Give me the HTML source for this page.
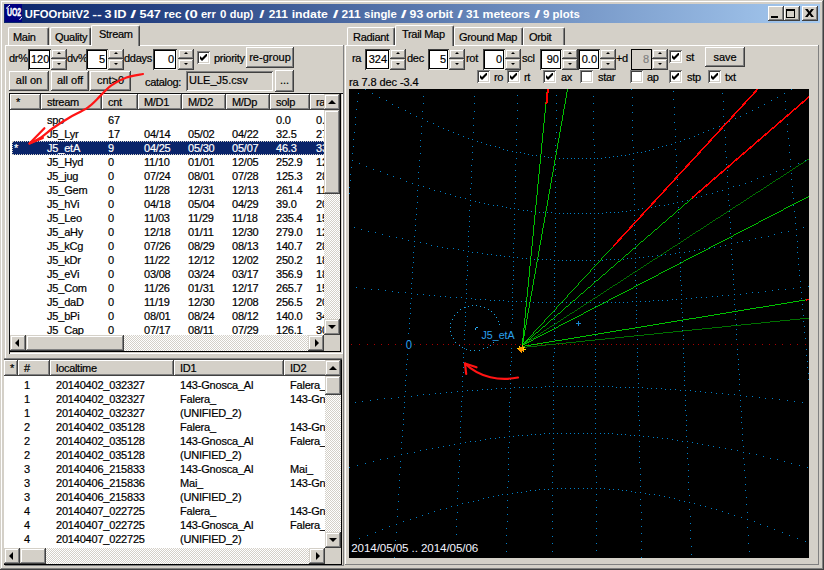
<!DOCTYPE html><html><head><meta charset="utf-8"><title>UFOOrbitV2</title><style>
html,body{margin:0;padding:0;}
body{width:824px;height:570px;overflow:hidden;background:#d4d0c8;position:relative;font-family:"Liberation Sans",sans-serif;font-size:11px;color:#000;-webkit-text-stroke:0.2px;}
.a{position:absolute;white-space:nowrap;}
.t{position:absolute;white-space:nowrap;line-height:13px;height:13px;letter-spacing:-0.3px;}
.btn{position:absolute;background:#d4d0c8;box-shadow:inset -1px -1px #404040,inset 1px 1px #fff,inset -2px -2px #808080,inset 2px 2px #d4d0c8;text-align:center;white-space:nowrap;}
.sb{position:absolute;background:#d4d0c8;box-shadow:inset -1px -1px #404040,inset 1px 1px #d4d0c8,inset -2px -2px #808080,inset 2px 2px #fff;}
.edit{position:absolute;background:#fff;box-shadow:inset 1px 1px #404040,inset -1px -1px #f4f4f0,inset 2px 2px #000,inset -2px -2px #000;text-align:right;white-space:nowrap;box-sizing:border-box;}
.cb{position:absolute;width:13px;height:13px;background:#fff;box-shadow:inset 1px 1px #808080,inset -1px -1px #fff,inset 2px 2px #404040,inset -2px -2px #d4d0c8;}
.hc{letter-spacing:-0.3px;position:absolute;background:#d4d0c8;box-shadow:inset -1px -1px #404040,inset 1px 1px #fff,inset -2px -2px #808080;box-sizing:border-box;white-space:nowrap;overflow:hidden;}
.trk{position:absolute;background-color:#fff;background-image:linear-gradient(45deg,#d4d0c8 25%,transparent 25%,transparent 75%,#d4d0c8 75%),linear-gradient(45deg,#d4d0c8 25%,transparent 25%,transparent 75%,#d4d0c8 75%);background-size:2px 2px;background-position:0 0,1px 1px;}
.row{position:absolute;left:0;height:14px;line-height:14px;white-space:nowrap;letter-spacing:-0.2px;}
.row span{position:absolute;top:0;}
</style></head><body>
<div class="a" id="title" style="left:4px;top:4px;width:816px;height:19px;background:linear-gradient(90deg,#0a246a 0%,#a6caf0 100%);"></div>
<svg class="a" style="left:5px;top:4px" width="17" height="18" viewBox="0 0 17 18"><rect width="17" height="18" fill="#000080"/><text x="2" y="12" font-family="Liberation Sans,sans-serif" font-size="10" font-weight="bold" fill="#fff" stroke="#fff" stroke-width="0.4" textLength="14.2" lengthAdjust="spacingAndGlyphs">UO2</text><path d="M1 4.5 L5 1 M14.5 16 L17 13" stroke="#fff" stroke-width="1"/></svg>
<svg class="a" id="ttxt" style="left:0;top:4px" width="600" height="18" viewBox="0 4 600 18"><g font-family="Liberation Sans,sans-serif" font-size="11.5" font-weight="bold" fill="#fff"><text x="24.8" y="17.7" textLength="64.4" lengthAdjust="spacingAndGlyphs">UFOOrbitV2</text><text x="92.3" y="17.7" textLength="9.5" lengthAdjust="spacingAndGlyphs">--</text><text x="104.5" y="17.7" textLength="7.0" lengthAdjust="spacingAndGlyphs">3</text><text x="113.7" y="17.7" textLength="12.8" lengthAdjust="spacingAndGlyphs">ID</text><text x="130.2" y="17.7" textLength="6.0" lengthAdjust="spacingAndGlyphs">/</text><text x="139.6" y="17.7" textLength="21.2" lengthAdjust="spacingAndGlyphs">547</text><text x="163.9" y="17.7" textLength="17.6" lengthAdjust="spacingAndGlyphs">rec</text><text x="184.5" y="17.7" textLength="13.2" lengthAdjust="spacingAndGlyphs">(0</text><text x="200.9" y="17.7" textLength="14.9" lengthAdjust="spacingAndGlyphs">err</text><text x="220.1" y="17.7" textLength="6.4" lengthAdjust="spacingAndGlyphs">0</text><text x="229.8" y="17.7" textLength="23.7" lengthAdjust="spacingAndGlyphs">dup)</text><text x="259.3" y="17.7" textLength="5.2" lengthAdjust="spacingAndGlyphs">/</text><text x="268.7" y="17.7" textLength="19.2" lengthAdjust="spacingAndGlyphs">211</text><text x="291.7" y="17.7" textLength="36.2" lengthAdjust="spacingAndGlyphs">indate</text><text x="332.8" y="17.7" textLength="5.7" lengthAdjust="spacingAndGlyphs">/</text><text x="341.5" y="17.7" textLength="19.2" lengthAdjust="spacingAndGlyphs">211</text><text x="364.1" y="17.7" textLength="32.7" lengthAdjust="spacingAndGlyphs">single</text><text x="400.8" y="17.7" textLength="5.9" lengthAdjust="spacingAndGlyphs">/</text><text x="409.6" y="17.7" textLength="13.7" lengthAdjust="spacingAndGlyphs">93</text><text x="425.9" y="17.7" textLength="27.2" lengthAdjust="spacingAndGlyphs">orbit</text><text x="457.3" y="17.7" textLength="5.7" lengthAdjust="spacingAndGlyphs">/</text><text x="466.0" y="17.7" textLength="13.1" lengthAdjust="spacingAndGlyphs">31</text><text x="482.5" y="17.7" textLength="47.6" lengthAdjust="spacingAndGlyphs">meteors</text><text x="534.2" y="17.7" textLength="6.0" lengthAdjust="spacingAndGlyphs">/</text><text x="543.1" y="17.7" textLength="6.4" lengthAdjust="spacingAndGlyphs">9</text><text x="552.6" y="17.7" textLength="27.2" lengthAdjust="spacingAndGlyphs">plots</text></g></svg>
<div class="btn" style="left:768px;top:6px;width:16px;height:15px;"></div>
<div class="a" style="left:771px;top:16px;width:7px;height:2px;background:#000"></div>
<div class="btn" style="left:784px;top:6px;width:16px;height:15px;"></div>
<div class="a" style="left:786px;top:9px;width:9px;height:9px;box-sizing:border-box;border:1px solid #000;border-top-width:2px"></div>
<div class="btn" style="left:802px;top:6px;width:16px;height:15px;"></div>
<svg class="a" style="left:805px;top:9px" width="9" height="8" viewBox="0 0 8 7" preserveAspectRatio="none"><path d="M0 0h2.4l1.6 2.1 1.6-2.1h2.4l-2.8 3.5 2.8 3.5h-2.4l-1.6-2.1-1.6 2.1h-2.4l2.8-3.5z" fill="#000"/></svg>
<div class="a" style="left:5px;top:45px;width:339px;height:521px;box-sizing:border-box;box-shadow:inset -1px -1px #808080,inset 1px 1px #fff;"></div>
<div class="a" style="left:8px;top:27px;width:41px;height:18px;box-sizing:border-box;border-top:1px solid #fff;border-left:1px solid #fff;border-right:1px solid #404040;border-radius:2px 2px 0 0;box-shadow:inset -1px 0 #808080;"></div>
<div class="t" style="left:13px;top:31px;">Main</div>
<div class="a" style="left:50px;top:27px;width:41px;height:18px;box-sizing:border-box;border-top:1px solid #fff;border-left:1px solid #fff;border-right:1px solid #404040;border-radius:2px 2px 0 0;box-shadow:inset -1px 0 #808080;"></div>
<div class="t" style="left:55px;top:31px;">Quality</div>
<div class="a" style="left:91px;top:25px;width:49px;height:21px;box-sizing:border-box;background:#d4d0c8;border-top:1px solid #fff;border-left:1px solid #fff;border-right:1px solid #404040;border-radius:2px 2px 0 0;box-shadow:inset -1px 0 #808080;"></div>
<div class="t" style="left:99px;top:28px;">Stream</div>
<div class="t" style="left:9px;top:52px;">dr%</div>
<div class="edit" style="left:28px;top:49px;width:23px;height:21px;line-height:20px;padding:0 3px 0 3px;"><span style="">120</span></div>
<div class="sb" style="left:51px;top:49px;width:16px;height:10px;"></div>
<div class="sb" style="left:51px;top:59px;width:16px;height:11px;"></div>
<svg class="a" style="left:57px;top:52px" width="4" height="2" viewBox="0 0 4 2"><polygon points="0,2 2,0 4,2" fill="#000"/></svg>
<svg class="a" style="left:57px;top:63px" width="4" height="2" viewBox="0 0 4 2"><polygon points="0,0 4,0 2,2" fill="#000"/></svg>
<div class="t" style="left:67px;top:52px;">dv%</div>
<div class="edit" style="left:86px;top:49px;width:22px;height:21px;line-height:20px;padding:0 3px 0 3px;"><span style="">5</span></div>
<div class="sb" style="left:108px;top:49px;width:16px;height:10px;"></div>
<div class="sb" style="left:108px;top:59px;width:16px;height:11px;"></div>
<svg class="a" style="left:114px;top:52px" width="4" height="2" viewBox="0 0 4 2"><polygon points="0,2 2,0 4,2" fill="#000"/></svg>
<svg class="a" style="left:114px;top:63px" width="4" height="2" viewBox="0 0 4 2"><polygon points="0,0 4,0 2,2" fill="#000"/></svg>
<div class="t" style="left:124px;top:52px;">ddays</div>
<div class="edit" style="left:153px;top:49px;width:24px;height:21px;line-height:20px;padding:0 3px 0 3px;"><span style="">0</span></div>
<div class="sb" style="left:178px;top:49px;width:16px;height:10px;"></div>
<div class="sb" style="left:178px;top:59px;width:16px;height:11px;"></div>
<svg class="a" style="left:184px;top:52px" width="4" height="2" viewBox="0 0 4 2"><polygon points="0,2 2,0 4,2" fill="#000"/></svg>
<svg class="a" style="left:184px;top:63px" width="4" height="2" viewBox="0 0 4 2"><polygon points="0,0 4,0 2,2" fill="#000"/></svg>
<div class="cb" style="left:197px;top:51px;"></div>
<svg class="a" style="left:200px;top:54px" width="7" height="7" viewBox="0 0 7 7"><path d="M0 2v3l2 2 5-5V-1L2 4z" fill="#000"/></svg>
<div class="t" style="left:214px;top:52px;">priority</div>
<div class="btn" style="left:246px;top:47px;width:48px;height:21px;line-height:20px;">re-group</div>
<div class="btn" style="left:9px;top:71px;width:40px;height:20px;line-height:19px;">all on</div>
<div class="btn" style="left:51px;top:71px;width:38px;height:20px;line-height:19px;">all off</div>
<div class="btn" style="left:90px;top:71px;width:41px;height:20px;line-height:19px;">cnt&gt;0</div>
<div class="t" style="left:145px;top:76px;">catalog:</div>
<div class="edit" style="left:186px;top:71px;width:87px;height:20px;line-height:19px;padding:0 3px 0 3px;background:#d4d0c8;text-align:left;box-shadow:inset 1px 1px #808080,inset -1px -1px #fff,inset 2px 2px #404040,inset -2px -2px #d4d0c8;"><span style="">ULE_J5.csv</span></div>
<div class="btn" style="left:275px;top:70px;width:19px;height:22px;line-height:21px;">...</div>
<div class="a" style="left:8px;top:92px;width:335px;height:262px;background:#fff;box-shadow:inset 1px 1px #e0ded8,inset 2px 2px #101010,inset -1px -1px #fff,inset -2px -2px #d4d0c8,inset -3px -3px #000;box-sizing:border-box;"></div>
<div class="a" style="left:10px;top:94px;width:330px;height:257px;background:#fff;"></div>
<div class="a" style="left:10px;top:94px;width:314px;height:241px;overflow:hidden;">
<div class="hc" style="left:0px;top:0;width:31px;height:16px;line-height:17px;padding-left:6px;">*</div>
<div class="hc" style="left:31px;top:0;width:61px;height:16px;line-height:17px;padding-left:6px;">stream</div>
<div class="hc" style="left:92px;top:0;width:36px;height:16px;line-height:17px;padding-left:6px;">cnt</div>
<div class="hc" style="left:128px;top:0;width:44px;height:16px;line-height:17px;padding-left:6px;">M/D1</div>
<div class="hc" style="left:172px;top:0;width:44px;height:16px;line-height:17px;padding-left:6px;">M/D2</div>
<div class="hc" style="left:216px;top:0;width:44px;height:16px;line-height:17px;padding-left:6px;">M/Dp</div>
<div class="hc" style="left:260px;top:0;width:40px;height:16px;line-height:17px;padding-left:6px;">solp</div>
<div class="hc" style="left:300px;top:0;width:40px;height:16px;line-height:17px;padding-left:6px;">ra</div>
<div class="row" style="top:19px;">
<span style="left:37px">spo</span>
<span style="left:98px">67</span>
<span style="left:266px">0.0</span>
<span style="left:306px">0.</span>
</div>
<div class="row" style="top:33px;">
<span style="left:37px">J5_Lyr</span>
<span style="left:98px">17</span>
<span style="left:134px">04/14</span>
<span style="left:178px">05/02</span>
<span style="left:222px">04/22</span>
<span style="left:266px">32.5</span>
<span style="left:306px">27</span>
</div>
<div class="a" style="left:2px;top:47px;width:314px;height:14px;background:#0a246a;box-sizing:border-box;border:1px dotted #d4d0c8;"></div>
<div class="row" style="top:47px;color:#fff;">
<span style="left:4px">*</span>
<span style="left:37px">J5_etA</span>
<span style="left:98px">9</span>
<span style="left:134px">04/25</span>
<span style="left:178px">05/30</span>
<span style="left:222px">05/07</span>
<span style="left:266px">46.3</span>
<span style="left:306px">33</span>
</div>
<div class="row" style="top:61px;">
<span style="left:37px">J5_Hyd</span>
<span style="left:98px">0</span>
<span style="left:134px">11/10</span>
<span style="left:178px">01/01</span>
<span style="left:222px">12/05</span>
<span style="left:266px">252.9</span>
<span style="left:306px">12</span>
</div>
<div class="row" style="top:75px;">
<span style="left:37px">J5_jug</span>
<span style="left:98px">0</span>
<span style="left:134px">07/24</span>
<span style="left:178px">08/01</span>
<span style="left:222px">07/28</span>
<span style="left:266px">125.3</span>
<span style="left:306px">28</span>
</div>
<div class="row" style="top:89px;">
<span style="left:37px">J5_Gem</span>
<span style="left:98px">0</span>
<span style="left:134px">11/28</span>
<span style="left:178px">12/31</span>
<span style="left:222px">12/13</span>
<span style="left:266px">261.4</span>
<span style="left:306px">11</span>
</div>
<div class="row" style="top:103px;">
<span style="left:37px">J5_hVi</span>
<span style="left:98px">0</span>
<span style="left:134px">04/18</span>
<span style="left:178px">05/04</span>
<span style="left:222px">04/29</span>
<span style="left:266px">39.0</span>
<span style="left:306px">20</span>
</div>
<div class="row" style="top:117px;">
<span style="left:37px">J5_Leo</span>
<span style="left:98px">0</span>
<span style="left:134px">11/03</span>
<span style="left:178px">11/29</span>
<span style="left:222px">11/18</span>
<span style="left:266px">235.4</span>
<span style="left:306px">15</span>
</div>
<div class="row" style="top:131px;">
<span style="left:37px">J5_aHy</span>
<span style="left:98px">0</span>
<span style="left:134px">12/18</span>
<span style="left:178px">01/11</span>
<span style="left:222px">12/30</span>
<span style="left:266px">279.0</span>
<span style="left:306px">12</span>
</div>
<div class="row" style="top:145px;">
<span style="left:37px">J5_kCg</span>
<span style="left:98px">0</span>
<span style="left:134px">07/26</span>
<span style="left:178px">08/29</span>
<span style="left:222px">08/13</span>
<span style="left:266px">140.7</span>
<span style="left:306px">28</span>
</div>
<div class="row" style="top:159px;">
<span style="left:37px">J5_kDr</span>
<span style="left:98px">0</span>
<span style="left:134px">11/22</span>
<span style="left:178px">12/12</span>
<span style="left:222px">12/02</span>
<span style="left:266px">250.2</span>
<span style="left:306px">18</span>
</div>
<div class="row" style="top:173px;">
<span style="left:37px">J5_eVi</span>
<span style="left:98px">0</span>
<span style="left:134px">03/08</span>
<span style="left:178px">03/24</span>
<span style="left:222px">03/17</span>
<span style="left:266px">356.9</span>
<span style="left:306px">18</span>
</div>
<div class="row" style="top:187px;">
<span style="left:37px">J5_Com</span>
<span style="left:98px">0</span>
<span style="left:134px">11/26</span>
<span style="left:178px">01/31</span>
<span style="left:222px">12/17</span>
<span style="left:266px">265.7</span>
<span style="left:306px">15</span>
</div>
<div class="row" style="top:201px;">
<span style="left:37px">J5_daD</span>
<span style="left:98px">0</span>
<span style="left:134px">11/19</span>
<span style="left:178px">12/30</span>
<span style="left:222px">12/08</span>
<span style="left:266px">256.5</span>
<span style="left:306px">20</span>
</div>
<div class="row" style="top:215px;">
<span style="left:37px">J5_bPi</span>
<span style="left:98px">0</span>
<span style="left:134px">08/01</span>
<span style="left:178px">08/24</span>
<span style="left:222px">08/12</span>
<span style="left:266px">140.0</span>
<span style="left:306px">34</span>
</div>
<div class="row" style="top:229px;">
<span style="left:37px">J5_Cap</span>
<span style="left:98px">0</span>
<span style="left:134px">07/17</span>
<span style="left:178px">08/11</span>
<span style="left:222px">07/29</span>
<span style="left:266px">126.1</span>
<span style="left:306px">30</span>
</div>
</div>
<div class="trk" style="left:324px;top:94px;width:16px;height:241px;"></div>
<div class="sb" style="left:324px;top:94px;width:16px;height:16px;"></div>
<svg class="a" style="left:328px;top:100px" width="8" height="4" viewBox="0 0 8 4"><polygon points="0,4 4,0 8,4" fill="#000"/></svg>
<div class="sb" style="left:324px;top:319px;width:16px;height:16px;"></div>
<svg class="a" style="left:328px;top:325px" width="8" height="4" viewBox="0 0 8 4"><polygon points="0,0 8,0 4,4" fill="#000"/></svg>
<div class="sb" style="left:324px;top:110px;width:16px;height:84px;"></div>
<div class="trk" style="left:10px;top:335px;width:314px;height:16px;"></div>
<div class="sb" style="left:10px;top:335px;width:16px;height:16px;"></div>
<svg class="a" style="left:15px;top:339px" width="4" height="8" viewBox="0 0 4 8"><polygon points="4,0 4,8 0,4" fill="#000"/></svg>
<div class="sb" style="left:308px;top:335px;width:16px;height:16px;"></div>
<svg class="a" style="left:315px;top:339px" width="4" height="8" viewBox="0 0 4 8"><polygon points="0,0 0,8 4,4" fill="#000"/></svg>
<div class="sb" style="left:26px;top:335px;width:98px;height:16px;"></div>
<div class="a" style="left:324px;top:335px;width:16px;height:16px;background:#d4d0c8;"></div>
<div class="a" style="left:2px;top:358px;width:340px;height:207px;background:#fff;box-shadow:inset 0 1px #808080,inset 0 2px #404040,inset -1px -1px #000;box-sizing:border-box;"></div>
<div class="a" style="left:4px;top:360px;width:337px;height:204px;background:#fff;"></div>
<div class="a" style="left:4px;top:360px;width:321px;height:188px;overflow:hidden;">
<div class="hc" style="left:0px;top:0;width:14px;height:16px;line-height:17px;padding-left:6px;">*</div>
<div class="hc" style="left:14px;top:0;width:32px;height:16px;line-height:17px;padding-left:6px;">#</div>
<div class="hc" style="left:46px;top:0;width:124px;height:16px;line-height:17px;padding-left:6px;">localtime</div>
<div class="hc" style="left:170px;top:0;width:110px;height:16px;line-height:17px;padding-left:6px;">ID1</div>
<div class="hc" style="left:280px;top:0;width:60px;height:16px;line-height:17px;padding-left:6px;">ID2</div>
<div class="row" style="top:18px;">
<span style="left:20px">1</span>
<span style="left:52px">20140402_032327</span>
<span style="left:176px">143-Gnosca_Al</span>
<span style="left:286px">Falera_</span>
</div>
<div class="row" style="top:32px;">
<span style="left:20px">1</span>
<span style="left:52px">20140402_032327</span>
<span style="left:176px">Falera_</span>
<span style="left:286px">143-Gnosca_Al</span>
</div>
<div class="row" style="top:46px;">
<span style="left:20px">1</span>
<span style="left:52px">20140402_032327</span>
<span style="left:176px">(UNIFIED_2)</span>
</div>
<div class="row" style="top:60px;">
<span style="left:20px">2</span>
<span style="left:52px">20140402_035128</span>
<span style="left:176px">Falera_</span>
<span style="left:286px">143-Gnosca_Al</span>
</div>
<div class="row" style="top:74px;">
<span style="left:20px">2</span>
<span style="left:52px">20140402_035128</span>
<span style="left:176px">143-Gnosca_Al</span>
<span style="left:286px">Falera_</span>
</div>
<div class="row" style="top:88px;">
<span style="left:20px">2</span>
<span style="left:52px">20140402_035128</span>
<span style="left:176px">(UNIFIED_2)</span>
</div>
<div class="row" style="top:102px;">
<span style="left:20px">3</span>
<span style="left:52px">20140406_215833</span>
<span style="left:176px">143-Gnosca_Al</span>
<span style="left:286px">Mai_</span>
</div>
<div class="row" style="top:116px;">
<span style="left:20px">3</span>
<span style="left:52px">20140406_215836</span>
<span style="left:176px">Mai_</span>
<span style="left:286px">143-Gnosca_Al</span>
</div>
<div class="row" style="top:130px;">
<span style="left:20px">3</span>
<span style="left:52px">20140406_215833</span>
<span style="left:176px">(UNIFIED_2)</span>
</div>
<div class="row" style="top:144px;">
<span style="left:20px">4</span>
<span style="left:52px">20140407_022725</span>
<span style="left:176px">Falera_</span>
<span style="left:286px">143-Gnosca_Al</span>
</div>
<div class="row" style="top:158px;">
<span style="left:20px">4</span>
<span style="left:52px">20140407_022725</span>
<span style="left:176px">143-Gnosca_Al</span>
<span style="left:286px">Falera_</span>
</div>
<div class="row" style="top:172px;">
<span style="left:20px">4</span>
<span style="left:52px">20140407_022725</span>
<span style="left:176px">(UNIFIED_2)</span>
</div>
</div>
<div class="trk" style="left:325px;top:360px;width:16px;height:188px;"></div>
<div class="sb" style="left:325px;top:360px;width:16px;height:16px;"></div>
<svg class="a" style="left:329px;top:366px" width="8" height="4" viewBox="0 0 8 4"><polygon points="0,4 4,0 8,4" fill="#000"/></svg>
<div class="sb" style="left:325px;top:532px;width:16px;height:16px;"></div>
<svg class="a" style="left:329px;top:538px" width="8" height="4" viewBox="0 0 8 4"><polygon points="0,0 8,0 4,4" fill="#000"/></svg>
<div class="sb" style="left:325px;top:376px;width:16px;height:19px;"></div>
<div class="trk" style="left:4px;top:548px;width:321px;height:16px;"></div>
<div class="sb" style="left:4px;top:548px;width:16px;height:16px;"></div>
<svg class="a" style="left:9px;top:552px" width="4" height="8" viewBox="0 0 4 8"><polygon points="4,0 4,8 0,4" fill="#000"/></svg>
<div class="sb" style="left:309px;top:548px;width:16px;height:16px;"></div>
<svg class="a" style="left:316px;top:552px" width="4" height="8" viewBox="0 0 4 8"><polygon points="0,0 0,8 4,4" fill="#000"/></svg>
<div class="sb" style="left:20px;top:548px;width:26px;height:16px;"></div>
<div class="a" style="left:325px;top:548px;width:16px;height:16px;background:#d4d0c8;"></div>
<div class="a" style="left:345px;top:45px;width:474px;height:520px;box-sizing:border-box;box-shadow:inset -1px -1px #808080,inset 1px 1px #fff;"></div>
<div class="a" style="left:347px;top:27px;width:48px;height:18px;box-sizing:border-box;border-top:1px solid #fff;border-left:1px solid #fff;border-right:1px solid #404040;border-radius:2px 2px 0 0;box-shadow:inset -1px 0 #808080;"></div>
<div class="t" style="left:353px;top:31px;">Radiant</div>
<div class="a" style="left:454px;top:27px;width:69px;height:18px;box-sizing:border-box;border-top:1px solid #fff;border-left:1px solid #fff;border-right:1px solid #404040;border-radius:2px 2px 0 0;box-shadow:inset -1px 0 #808080;"></div>
<div class="t" style="left:459px;top:31px;">Ground Map</div>
<div class="a" style="left:523px;top:27px;width:42px;height:18px;box-sizing:border-box;border-top:1px solid #fff;border-left:1px solid #fff;border-right:1px solid #404040;border-radius:2px 2px 0 0;box-shadow:inset -1px 0 #808080;"></div>
<div class="t" style="left:529px;top:31px;">Orbit</div>
<div class="a" style="left:395px;top:25px;width:59px;height:21px;box-sizing:border-box;background:#d4d0c8;border-top:1px solid #fff;border-left:1px solid #fff;border-right:1px solid #404040;border-radius:2px 2px 0 0;box-shadow:inset -1px 0 #808080;"></div>
<div class="t" style="left:402px;top:28px;">Trail Map</div>
<div class="t" style="left:352px;top:52px;">ra</div>
<div class="edit" style="left:365px;top:49px;width:25px;height:21px;line-height:20px;padding:0 3px 0 3px;"><span style="">324</span></div>
<div class="sb" style="left:390px;top:49px;width:16px;height:10px;"></div>
<div class="sb" style="left:390px;top:59px;width:16px;height:11px;"></div>
<svg class="a" style="left:396px;top:52px" width="4" height="2" viewBox="0 0 4 2"><polygon points="0,2 2,0 4,2" fill="#000"/></svg>
<svg class="a" style="left:396px;top:63px" width="4" height="2" viewBox="0 0 4 2"><polygon points="0,0 4,0 2,2" fill="#000"/></svg>
<div class="t" style="left:407px;top:52px;">dec</div>
<div class="edit" style="left:428px;top:49px;width:21px;height:21px;line-height:20px;padding:0 3px 0 3px;"><span style="">5</span></div>
<div class="sb" style="left:449px;top:49px;width:16px;height:10px;"></div>
<div class="sb" style="left:449px;top:59px;width:16px;height:11px;"></div>
<svg class="a" style="left:455px;top:52px" width="4" height="2" viewBox="0 0 4 2"><polygon points="0,2 2,0 4,2" fill="#000"/></svg>
<svg class="a" style="left:455px;top:63px" width="4" height="2" viewBox="0 0 4 2"><polygon points="0,0 4,0 2,2" fill="#000"/></svg>
<div class="t" style="left:466px;top:52px;">rot</div>
<div class="edit" style="left:483px;top:49px;width:22px;height:21px;line-height:20px;padding:0 3px 0 3px;"><span style="">0</span></div>
<div class="sb" style="left:505px;top:49px;width:16px;height:10px;"></div>
<div class="sb" style="left:505px;top:59px;width:16px;height:11px;"></div>
<svg class="a" style="left:511px;top:52px" width="4" height="2" viewBox="0 0 4 2"><polygon points="0,2 2,0 4,2" fill="#000"/></svg>
<svg class="a" style="left:511px;top:63px" width="4" height="2" viewBox="0 0 4 2"><polygon points="0,0 4,0 2,2" fill="#000"/></svg>
<div class="t" style="left:522px;top:52px;">scl</div>
<div class="edit" style="left:540px;top:49px;width:22px;height:21px;line-height:20px;padding:0 3px 0 3px;"><span style="">90</span></div>
<div class="sb" style="left:562px;top:49px;width:16px;height:10px;"></div>
<div class="sb" style="left:562px;top:59px;width:16px;height:11px;"></div>
<svg class="a" style="left:568px;top:52px" width="4" height="2" viewBox="0 0 4 2"><polygon points="0,2 2,0 4,2" fill="#000"/></svg>
<svg class="a" style="left:568px;top:63px" width="4" height="2" viewBox="0 0 4 2"><polygon points="0,0 4,0 2,2" fill="#000"/></svg>
<div class="edit" style="left:578px;top:49px;width:22px;height:21px;line-height:20px;padding:0 3px 0 3px;"><span style="">0.0</span></div>
<div class="sb" style="left:600px;top:49px;width:16px;height:10px;"></div>
<div class="sb" style="left:600px;top:59px;width:16px;height:11px;"></div>
<svg class="a" style="left:606px;top:52px" width="4" height="2" viewBox="0 0 4 2"><polygon points="0,2 2,0 4,2" fill="#000"/></svg>
<svg class="a" style="left:606px;top:63px" width="4" height="2" viewBox="0 0 4 2"><polygon points="0,0 4,0 2,2" fill="#000"/></svg>
<div class="t" style="left:616px;top:52px;">+d</div>
<div class="edit" style="left:631px;top:49px;width:21px;height:21px;line-height:20px;padding:0 3px 0 3px;background:#d4d0c8;color:#808080;box-shadow:inset 0 0 0 1px #000;"><span style="">8</span></div>
<div class="sb" style="left:652px;top:49px;width:16px;height:10px;"></div>
<div class="sb" style="left:652px;top:59px;width:16px;height:11px;"></div>
<svg class="a" style="left:658px;top:52px" width="4" height="2" viewBox="0 0 4 2"><polygon points="0,2 2,0 4,2" fill="#000"/></svg>
<svg class="a" style="left:658px;top:63px" width="4" height="2" viewBox="0 0 4 2"><polygon points="0,0 4,0 2,2" fill="#000"/></svg>
<div class="cb" style="left:669px;top:50px;"></div>
<svg class="a" style="left:672px;top:53px" width="7" height="7" viewBox="0 0 7 7"><path d="M0 2v3l2 2 5-5V-1L2 4z" fill="#000"/></svg>
<div class="t" style="left:686px;top:51px;">st</div>
<div class="btn" style="left:705px;top:47px;width:40px;height:20px;line-height:19px;line-height:20px;">save</div>
<div class="cb" style="left:477px;top:70px;"></div>
<svg class="a" style="left:480px;top:73px" width="7" height="7" viewBox="0 0 7 7"><path d="M0 2v3l2 2 5-5V-1L2 4z" fill="#000"/></svg>
<div class="t" style="left:494px;top:71px;">ro</div>
<div class="cb" style="left:507px;top:70px;"></div>
<svg class="a" style="left:510px;top:73px" width="7" height="7" viewBox="0 0 7 7"><path d="M0 2v3l2 2 5-5V-1L2 4z" fill="#000"/></svg>
<div class="t" style="left:524px;top:71px;">rt</div>
<div class="cb" style="left:543px;top:70px;"></div>
<svg class="a" style="left:546px;top:73px" width="7" height="7" viewBox="0 0 7 7"><path d="M0 2v3l2 2 5-5V-1L2 4z" fill="#000"/></svg>
<div class="t" style="left:561px;top:71px;">ax</div>
<div class="cb" style="left:580px;top:70px;"></div>
<div class="t" style="left:598px;top:71px;">star</div>
<div class="cb" style="left:630px;top:70px;"></div>
<div class="t" style="left:647px;top:71px;">ap</div>
<div class="cb" style="left:669px;top:70px;"></div>
<svg class="a" style="left:672px;top:73px" width="7" height="7" viewBox="0 0 7 7"><path d="M0 2v3l2 2 5-5V-1L2 4z" fill="#000"/></svg>
<div class="t" style="left:687px;top:71px;">stp</div>
<div class="cb" style="left:708px;top:70px;"></div>
<svg class="a" style="left:711px;top:73px" width="7" height="7" viewBox="0 0 7 7"><path d="M0 2v3l2 2 5-5V-1L2 4z" fill="#000"/></svg>
<div class="t" style="left:725px;top:71px;">txt</div>
<div class="t" style="left:349px;top:76px;letter-spacing:-0.1px;">ra 7.8 dec -3.4</div>
<svg class="a" style="left:349px;top:89px" width="460" height="469" viewBox="349 89 460 469" shape-rendering="crispEdges"><rect x="349" y="89" width="460" height="469" fill="#000"/><path d="M394 557h1v1h-1zM395 548h1v1h-1zM395 540h1v1h-1zM396 532h1v1h-1zM396 524h1v1h-1zM397 516h1v1h-1zM397 509h1v1h-1zM398 501h1v1h-1zM398 494h1v1h-1zM399 487h1v1h-1zM399 480h1v1h-1zM399 474h1v1h-1zM400 467h1v1h-1zM400 461h1v1h-1zM401 454h1v1h-1zM401 448h1v1h-1zM401 442h1v1h-1zM402 436h1v1h-1zM402 430h1v1h-1zM403 424h1v1h-1zM403 419h1v1h-1zM403 413h1v1h-1zM404 407h1v1h-1zM404 402h1v1h-1zM404 396h1v1h-1zM405 391h1v1h-1zM405 385h1v1h-1zM405 380h1v1h-1zM406 375h1v1h-1zM406 369h1v1h-1zM406 364h1v1h-1zM407 359h1v1h-1zM407 354h1v1h-1zM407 349h1v1h-1zM408 344h1v1h-1zM408 338h1v1h-1zM408 333h1v1h-1zM409 328h1v1h-1zM409 323h1v1h-1zM409 318h1v1h-1zM410 313h1v1h-1zM410 308h1v1h-1zM410 303h1v1h-1zM411 298h1v1h-1zM411 293h1v1h-1zM411 288h1v1h-1zM411 283h1v1h-1zM412 278h1v1h-1zM412 272h1v1h-1zM412 267h1v1h-1zM413 262h1v1h-1zM413 257h1v1h-1zM413 252h1v1h-1zM414 246h1v1h-1zM414 241h1v1h-1zM414 236h1v1h-1zM415 230h1v1h-1zM415 225h1v1h-1zM415 219h1v1h-1zM416 214h1v1h-1zM416 208h1v1h-1zM417 202h1v1h-1zM417 196h1v1h-1zM417 190h1v1h-1zM418 185h1v1h-1zM418 178h1v1h-1zM418 172h1v1h-1zM419 166h1v1h-1zM419 160h1v1h-1zM420 153h1v1h-1zM420 146h1v1h-1zM420 140h1v1h-1zM421 133h1v1h-1zM421 126h1v1h-1zM422 118h1v1h-1zM422 111h1v1h-1zM423 103h1v1h-1zM423 96h1v1h-1zM349 193h1v1h-1zM349 187h1v1h-1zM350 180h1v1h-1zM350 174h1v1h-1zM351 167h1v1h-1zM352 160h1v1h-1zM352 153h1v1h-1zM353 146h1v1h-1zM353 139h1v1h-1zM354 132h1v1h-1zM355 124h1v1h-1zM355 117h1v1h-1zM356 109h1v1h-1zM357 101h1v1h-1zM358 93h1v1h-1zM808 379h1v1h-1zM808 373h1v1h-1zM807 367h1v1h-1zM807 361h1v1h-1zM806 355h1v1h-1zM806 349h1v1h-1zM805 344h1v1h-1zM805 338h1v1h-1zM804 332h1v1h-1zM804 326h1v1h-1zM803 321h1v1h-1zM803 315h1v1h-1zM802 309h1v1h-1zM802 304h1v1h-1zM801 298h1v1h-1zM801 292h1v1h-1zM800 287h1v1h-1zM800 281h1v1h-1zM799 275h1v1h-1zM799 270h1v1h-1zM798 264h1v1h-1zM798 258h1v1h-1zM797 252h1v1h-1zM797 247h1v1h-1zM797 241h1v1h-1zM796 235h1v1h-1zM796 229h1v1h-1zM795 223h1v1h-1zM795 217h1v1h-1zM794 211h1v1h-1zM793 205h1v1h-1zM793 198h1v1h-1zM792 192h1v1h-1zM792 186h1v1h-1zM791 179h1v1h-1zM791 173h1v1h-1zM790 166h1v1h-1zM790 159h1v1h-1zM789 152h1v1h-1zM789 145h1v1h-1zM788 138h1v1h-1zM787 131h1v1h-1zM787 124h1v1h-1zM786 116h1v1h-1zM785 109h1v1h-1zM785 101h1v1h-1zM784 93h1v1h-1zM749 551h1v1h-1zM748 543h1v1h-1zM748 535h1v1h-1zM747 527h1v1h-1zM747 519h1v1h-1zM747 512h1v1h-1zM746 504h1v1h-1zM746 497h1v1h-1zM745 490h1v1h-1zM745 484h1v1h-1zM745 477h1v1h-1zM744 470h1v1h-1zM744 464h1v1h-1zM743 458h1v1h-1zM743 452h1v1h-1zM743 446h1v1h-1zM742 440h1v1h-1zM742 434h1v1h-1zM742 428h1v1h-1zM741 422h1v1h-1zM741 417h1v1h-1zM741 411h1v1h-1zM740 406h1v1h-1zM740 400h1v1h-1zM740 395h1v1h-1zM739 390h1v1h-1zM739 384h1v1h-1zM739 379h1v1h-1zM739 374h1v1h-1zM738 369h1v1h-1zM738 364h1v1h-1zM738 359h1v1h-1zM737 354h1v1h-1zM737 349h1v1h-1zM737 344h1v1h-1zM736 339h1v1h-1zM736 334h1v1h-1zM736 329h1v1h-1zM736 324h1v1h-1zM735 319h1v1h-1zM735 314h1v1h-1zM735 309h1v1h-1zM734 304h1v1h-1zM734 299h1v1h-1zM734 294h1v1h-1zM734 289h1v1h-1zM733 284h1v1h-1zM733 279h1v1h-1zM733 274h1v1h-1zM732 269h1v1h-1zM732 264h1v1h-1zM732 259h1v1h-1zM731 254h1v1h-1zM731 249h1v1h-1zM731 243h1v1h-1zM731 238h1v1h-1zM730 233h1v1h-1zM730 228h1v1h-1zM730 222h1v1h-1zM729 217h1v1h-1zM729 211h1v1h-1zM729 205h1v1h-1zM728 200h1v1h-1zM728 194h1v1h-1zM728 188h1v1h-1zM727 182h1v1h-1zM727 176h1v1h-1zM727 170h1v1h-1zM726 164h1v1h-1zM726 157h1v1h-1zM725 151h1v1h-1zM725 144h1v1h-1zM725 137h1v1h-1zM724 130h1v1h-1zM724 123h1v1h-1zM723 116h1v1h-1zM723 109h1v1h-1zM723 101h1v1h-1zM722 93h1v1h-1zM691 554h1v1h-1zM691 546h1v1h-1zM690 538h1v1h-1zM690 530h1v1h-1zM690 523h1v1h-1zM690 516h1v1h-1zM689 509h1v1h-1zM689 502h1v1h-1zM689 495h1v1h-1zM688 489h1v1h-1zM688 482h1v1h-1zM688 476h1v1h-1zM688 470h1v1h-1zM688 464h1v1h-1zM687 458h1v1h-1zM687 453h1v1h-1zM687 447h1v1h-1zM687 441h1v1h-1zM686 436h1v1h-1zM686 430h1v1h-1zM686 425h1v1h-1zM686 420h1v1h-1zM686 415h1v1h-1zM685 410h1v1h-1zM685 405h1v1h-1zM685 400h1v1h-1zM685 395h1v1h-1zM685 390h1v1h-1zM684 385h1v1h-1zM684 380h1v1h-1zM684 376h1v1h-1zM684 371h1v1h-1zM684 366h1v1h-1zM684 362h1v1h-1zM683 357h1v1h-1zM683 353h1v1h-1zM683 348h1v1h-1zM683 344h1v1h-1zM683 339h1v1h-1zM683 335h1v1h-1zM682 330h1v1h-1zM682 326h1v1h-1zM682 321h1v1h-1zM682 317h1v1h-1zM682 312h1v1h-1zM681 308h1v1h-1zM681 303h1v1h-1zM681 299h1v1h-1zM681 294h1v1h-1zM681 290h1v1h-1zM681 285h1v1h-1zM680 280h1v1h-1zM680 276h1v1h-1zM680 271h1v1h-1zM680 267h1v1h-1zM680 262h1v1h-1zM680 257h1v1h-1zM679 252h1v1h-1zM679 248h1v1h-1zM679 243h1v1h-1zM679 238h1v1h-1zM679 233h1v1h-1zM678 228h1v1h-1zM678 223h1v1h-1zM678 218h1v1h-1zM678 212h1v1h-1zM678 207h1v1h-1zM677 202h1v1h-1zM677 196h1v1h-1zM677 191h1v1h-1zM677 185h1v1h-1zM677 179h1v1h-1zM676 173h1v1h-1zM676 167h1v1h-1zM676 161h1v1h-1zM676 155h1v1h-1zM675 149h1v1h-1zM675 142h1v1h-1zM675 136h1v1h-1zM675 129h1v1h-1zM674 122h1v1h-1zM674 114h1v1h-1zM674 107h1v1h-1zM673 99h1v1h-1zM673 91h1v1h-1zM641 557h1v1h-1zM641 549h1v1h-1zM641 541h1v1h-1zM641 533h1v1h-1zM641 526h1v1h-1zM641 519h1v1h-1zM641 512h1v1h-1zM640 505h1v1h-1zM640 499h1v1h-1zM640 492h1v1h-1zM640 486h1v1h-1zM640 480h1v1h-1zM640 474h1v1h-1zM640 468h1v1h-1zM639 462h1v1h-1zM639 457h1v1h-1zM639 451h1v1h-1zM639 446h1v1h-1zM639 441h1v1h-1zM639 435h1v1h-1zM639 430h1v1h-1zM639 425h1v1h-1zM639 420h1v1h-1zM638 415h1v1h-1zM638 411h1v1h-1zM638 406h1v1h-1zM638 401h1v1h-1zM638 396h1v1h-1zM638 392h1v1h-1zM638 387h1v1h-1zM638 383h1v1h-1zM638 378h1v1h-1zM638 374h1v1h-1zM637 369h1v1h-1zM637 365h1v1h-1zM637 361h1v1h-1zM637 356h1v1h-1zM637 352h1v1h-1zM637 348h1v1h-1zM637 344h1v1h-1zM637 339h1v1h-1zM637 335h1v1h-1zM637 331h1v1h-1zM636 327h1v1h-1zM636 322h1v1h-1zM636 318h1v1h-1zM636 314h1v1h-1zM636 310h1v1h-1zM636 305h1v1h-1zM636 301h1v1h-1zM636 297h1v1h-1zM636 293h1v1h-1zM636 288h1v1h-1zM636 284h1v1h-1zM635 280h1v1h-1zM635 275h1v1h-1zM635 271h1v1h-1zM635 267h1v1h-1zM635 262h1v1h-1zM635 258h1v1h-1zM635 253h1v1h-1zM635 248h1v1h-1zM635 244h1v1h-1zM635 239h1v1h-1zM635 234h1v1h-1zM634 230h1v1h-1zM634 225h1v1h-1zM634 220h1v1h-1zM634 215h1v1h-1zM634 210h1v1h-1zM634 204h1v1h-1zM634 199h1v1h-1zM634 194h1v1h-1zM634 188h1v1h-1zM633 183h1v1h-1zM633 177h1v1h-1zM633 171h1v1h-1zM633 165h1v1h-1zM633 159h1v1h-1zM633 153h1v1h-1zM633 147h1v1h-1zM632 140h1v1h-1zM632 134h1v1h-1zM632 127h1v1h-1zM632 120h1v1h-1zM632 112h1v1h-1zM632 105h1v1h-1zM632 97h1v1h-1zM631 89h1v1h-1zM596 550h1v1h-1zM596 543h1v1h-1zM596 535h1v1h-1zM596 528h1v1h-1zM596 521h1v1h-1zM596 514h1v1h-1zM596 507h1v1h-1zM596 500h1v1h-1zM596 494h1v1h-1zM596 488h1v1h-1zM596 482h1v1h-1zM596 476h1v1h-1zM595 470h1v1h-1zM595 465h1v1h-1zM595 459h1v1h-1zM595 454h1v1h-1zM595 448h1v1h-1zM595 443h1v1h-1zM595 438h1v1h-1zM595 433h1v1h-1zM595 428h1v1h-1zM595 423h1v1h-1zM595 418h1v1h-1zM595 413h1v1h-1zM595 409h1v1h-1zM595 404h1v1h-1zM595 399h1v1h-1zM595 395h1v1h-1zM595 391h1v1h-1zM595 386h1v1h-1zM595 382h1v1h-1zM595 377h1v1h-1zM595 373h1v1h-1zM595 369h1v1h-1zM595 364h1v1h-1zM595 360h1v1h-1zM595 356h1v1h-1zM595 352h1v1h-1zM595 348h1v1h-1zM595 344h1v1h-1zM595 339h1v1h-1zM595 335h1v1h-1zM595 331h1v1h-1zM595 327h1v1h-1zM595 323h1v1h-1zM595 319h1v1h-1zM595 315h1v1h-1zM595 311h1v1h-1zM595 306h1v1h-1zM594 302h1v1h-1zM594 298h1v1h-1zM594 294h1v1h-1zM594 290h1v1h-1zM594 286h1v1h-1zM594 281h1v1h-1zM594 277h1v1h-1zM594 273h1v1h-1zM594 269h1v1h-1zM594 264h1v1h-1zM594 260h1v1h-1zM594 255h1v1h-1zM594 251h1v1h-1zM594 246h1v1h-1zM594 242h1v1h-1zM594 237h1v1h-1zM594 233h1v1h-1zM594 228h1v1h-1zM594 223h1v1h-1zM594 218h1v1h-1zM594 213h1v1h-1zM594 208h1v1h-1zM594 203h1v1h-1zM594 198h1v1h-1zM594 192h1v1h-1zM594 187h1v1h-1zM594 181h1v1h-1zM594 176h1v1h-1zM594 170h1v1h-1zM594 164h1v1h-1zM594 158h1v1h-1zM594 152h1v1h-1zM594 145h1v1h-1zM593 139h1v1h-1zM593 132h1v1h-1zM593 125h1v1h-1zM593 118h1v1h-1zM593 111h1v1h-1zM593 103h1v1h-1zM593 96h1v1h-1zM552 551h1v1h-1zM552 543h1v1h-1zM552 536h1v1h-1zM552 528h1v1h-1zM552 521h1v1h-1zM552 514h1v1h-1zM552 508h1v1h-1zM552 501h1v1h-1zM552 495h1v1h-1zM552 488h1v1h-1zM552 482h1v1h-1zM552 476h1v1h-1zM552 471h1v1h-1zM553 465h1v1h-1zM553 459h1v1h-1zM553 454h1v1h-1zM553 449h1v1h-1zM553 443h1v1h-1zM553 438h1v1h-1zM553 433h1v1h-1zM553 428h1v1h-1zM553 423h1v1h-1zM553 418h1v1h-1zM553 414h1v1h-1zM553 409h1v1h-1zM553 404h1v1h-1zM553 400h1v1h-1zM553 395h1v1h-1zM553 391h1v1h-1zM553 386h1v1h-1zM553 382h1v1h-1zM553 377h1v1h-1zM553 373h1v1h-1zM553 369h1v1h-1zM553 365h1v1h-1zM553 360h1v1h-1zM553 356h1v1h-1zM554 352h1v1h-1zM554 348h1v1h-1zM554 344h1v1h-1zM554 339h1v1h-1zM554 335h1v1h-1zM554 331h1v1h-1zM554 327h1v1h-1zM554 323h1v1h-1zM554 319h1v1h-1zM554 315h1v1h-1zM554 311h1v1h-1zM554 306h1v1h-1zM554 302h1v1h-1zM554 298h1v1h-1zM554 294h1v1h-1zM554 290h1v1h-1zM554 285h1v1h-1zM554 281h1v1h-1zM554 277h1v1h-1zM554 273h1v1h-1zM554 268h1v1h-1zM554 264h1v1h-1zM554 260h1v1h-1zM554 255h1v1h-1zM554 251h1v1h-1zM555 246h1v1h-1zM555 242h1v1h-1zM555 237h1v1h-1zM555 232h1v1h-1zM555 227h1v1h-1zM555 223h1v1h-1zM555 218h1v1h-1zM555 213h1v1h-1zM555 208h1v1h-1zM555 203h1v1h-1zM555 197h1v1h-1zM555 192h1v1h-1zM555 187h1v1h-1zM555 181h1v1h-1zM555 175h1v1h-1zM555 169h1v1h-1zM555 164h1v1h-1zM555 158h1v1h-1zM555 151h1v1h-1zM555 145h1v1h-1zM555 138h1v1h-1zM556 132h1v1h-1zM556 125h1v1h-1zM556 118h1v1h-1zM556 110h1v1h-1zM556 103h1v1h-1zM556 95h1v1h-1zM506 551h1v1h-1zM506 543h1v1h-1zM506 535h1v1h-1zM506 528h1v1h-1zM507 521h1v1h-1zM507 514h1v1h-1zM507 507h1v1h-1zM507 500h1v1h-1zM507 494h1v1h-1zM507 487h1v1h-1zM508 481h1v1h-1zM508 475h1v1h-1zM508 469h1v1h-1zM508 464h1v1h-1zM508 458h1v1h-1zM508 452h1v1h-1zM508 447h1v1h-1zM509 442h1v1h-1zM509 436h1v1h-1zM509 431h1v1h-1zM509 426h1v1h-1zM509 421h1v1h-1zM509 416h1v1h-1zM509 411h1v1h-1zM509 406h1v1h-1zM509 402h1v1h-1zM510 397h1v1h-1zM510 392h1v1h-1zM510 388h1v1h-1zM510 383h1v1h-1zM510 379h1v1h-1zM510 374h1v1h-1zM510 370h1v1h-1zM510 365h1v1h-1zM511 361h1v1h-1zM511 357h1v1h-1zM511 352h1v1h-1zM511 348h1v1h-1zM511 344h1v1h-1zM511 339h1v1h-1zM511 335h1v1h-1zM511 331h1v1h-1zM511 326h1v1h-1zM511 322h1v1h-1zM512 318h1v1h-1zM512 314h1v1h-1zM512 309h1v1h-1zM512 305h1v1h-1zM512 301h1v1h-1zM512 297h1v1h-1zM512 292h1v1h-1zM512 288h1v1h-1zM512 284h1v1h-1zM513 279h1v1h-1zM513 275h1v1h-1zM513 270h1v1h-1zM513 266h1v1h-1zM513 261h1v1h-1zM513 257h1v1h-1zM513 252h1v1h-1zM513 248h1v1h-1zM513 243h1v1h-1zM514 238h1v1h-1zM514 233h1v1h-1zM514 229h1v1h-1zM514 224h1v1h-1zM514 219h1v1h-1zM514 214h1v1h-1zM514 208h1v1h-1zM514 203h1v1h-1zM515 198h1v1h-1zM515 193h1v1h-1zM515 187h1v1h-1zM515 181h1v1h-1zM515 176h1v1h-1zM515 170h1v1h-1zM515 164h1v1h-1zM516 158h1v1h-1zM516 152h1v1h-1zM516 145h1v1h-1zM516 139h1v1h-1zM516 132h1v1h-1zM516 125h1v1h-1zM517 118h1v1h-1zM517 110h1v1h-1zM517 103h1v1h-1zM517 95h1v1h-1zM455 550h1v1h-1zM455 542h1v1h-1zM456 534h1v1h-1zM456 526h1v1h-1zM456 519h1v1h-1zM457 512h1v1h-1zM457 505h1v1h-1zM457 498h1v1h-1zM457 491h1v1h-1zM458 485h1v1h-1zM458 478h1v1h-1zM458 472h1v1h-1zM459 466h1v1h-1zM459 460h1v1h-1zM459 454h1v1h-1zM459 449h1v1h-1zM460 443h1v1h-1zM460 437h1v1h-1zM460 432h1v1h-1zM460 427h1v1h-1zM460 421h1v1h-1zM461 416h1v1h-1zM461 411h1v1h-1zM461 406h1v1h-1zM461 401h1v1h-1zM462 396h1v1h-1zM462 391h1v1h-1zM462 386h1v1h-1zM462 381h1v1h-1zM462 376h1v1h-1zM463 372h1v1h-1zM463 367h1v1h-1zM463 362h1v1h-1zM463 357h1v1h-1zM463 353h1v1h-1zM464 348h1v1h-1zM464 344h1v1h-1zM464 339h1v1h-1zM464 334h1v1h-1zM464 330h1v1h-1zM465 325h1v1h-1zM465 321h1v1h-1zM465 316h1v1h-1zM465 312h1v1h-1zM465 307h1v1h-1zM465 302h1v1h-1zM466 298h1v1h-1zM466 293h1v1h-1zM466 289h1v1h-1zM466 284h1v1h-1zM466 279h1v1h-1zM467 275h1v1h-1zM467 270h1v1h-1zM467 265h1v1h-1zM467 261h1v1h-1zM467 256h1v1h-1zM468 251h1v1h-1zM468 246h1v1h-1zM468 241h1v1h-1zM468 236h1v1h-1zM468 231h1v1h-1zM469 226h1v1h-1zM469 221h1v1h-1zM469 216h1v1h-1zM469 210h1v1h-1zM470 205h1v1h-1zM470 200h1v1h-1zM470 194h1v1h-1zM470 188h1v1h-1zM471 183h1v1h-1zM471 177h1v1h-1zM471 171h1v1h-1zM471 165h1v1h-1zM472 159h1v1h-1zM472 152h1v1h-1zM472 146h1v1h-1zM472 139h1v1h-1zM473 132h1v1h-1zM473 125h1v1h-1zM473 118h1v1h-1zM474 111h1v1h-1zM474 103h1v1h-1zM474 96h1v1h-1zM396 524h1v1h-1zM389 526h1v1h-1zM382 529h1v1h-1zM375 532h1v1h-1zM367 535h1v1h-1zM359 538h1v1h-1zM351 541h1v1h-1zM805 541h1v1h-1zM797 538h1v1h-1zM789 535h1v1h-1zM782 532h1v1h-1zM774 529h1v1h-1zM767 526h1v1h-1zM760 524h1v1h-1zM754 521h1v1h-1zM747 519h1v1h-1zM741 517h1v1h-1zM734 515h1v1h-1zM728 513h1v1h-1zM722 511h1v1h-1zM716 509h1v1h-1zM711 508h1v1h-1zM705 506h1v1h-1zM700 505h1v1h-1zM694 503h1v1h-1zM689 502h1v1h-1zM684 501h1v1h-1zM679 500h1v1h-1zM674 498h1v1h-1zM669 497h1v1h-1zM664 496h1v1h-1zM659 495h1v1h-1zM654 494h1v1h-1zM649 494h1v1h-1zM645 493h1v1h-1zM640 492h1v1h-1zM635 492h1v1h-1zM631 491h1v1h-1zM626 490h1v1h-1zM622 490h1v1h-1zM618 489h1v1h-1zM613 489h1v1h-1zM609 489h1v1h-1zM604 488h1v1h-1zM600 488h1v1h-1zM596 488h1v1h-1zM591 488h1v1h-1zM587 488h1v1h-1zM583 488h1v1h-1zM578 488h1v1h-1zM574 488h1v1h-1zM570 488h1v1h-1zM565 488h1v1h-1zM561 488h1v1h-1zM557 488h1v1h-1zM552 488h1v1h-1zM548 489h1v1h-1zM544 489h1v1h-1zM539 489h1v1h-1zM535 490h1v1h-1zM530 490h1v1h-1zM526 491h1v1h-1zM521 492h1v1h-1zM517 492h1v1h-1zM512 493h1v1h-1zM507 494h1v1h-1zM502 494h1v1h-1zM498 495h1v1h-1zM493 496h1v1h-1zM488 497h1v1h-1zM483 498h1v1h-1zM478 500h1v1h-1zM473 501h1v1h-1zM468 502h1v1h-1zM462 503h1v1h-1zM457 505h1v1h-1zM451 506h1v1h-1zM446 508h1v1h-1zM440 509h1v1h-1zM434 511h1v1h-1zM428 513h1v1h-1zM422 515h1v1h-1zM416 517h1v1h-1zM410 519h1v1h-1zM403 521h1v1h-1zM401 454h1v1h-1zM394 456h1v1h-1zM387 458h1v1h-1zM380 459h1v1h-1zM373 461h1v1h-1zM365 463h1v1h-1zM357 465h1v1h-1zM349 467h1v1h-1zM807 467h1v1h-1zM799 465h1v1h-1zM791 463h1v1h-1zM784 461h1v1h-1zM777 459h1v1h-1zM770 458h1v1h-1zM763 456h1v1h-1zM756 454h1v1h-1zM749 453h1v1h-1zM743 452h1v1h-1zM737 450h1v1h-1zM731 449h1v1h-1zM725 448h1v1h-1zM719 447h1v1h-1zM713 446h1v1h-1zM708 445h1v1h-1zM702 444h1v1h-1zM697 443h1v1h-1zM692 442h1v1h-1zM687 441h1v1h-1zM682 441h1v1h-1zM677 440h1v1h-1zM672 439h1v1h-1zM667 438h1v1h-1zM662 438h1v1h-1zM657 437h1v1h-1zM653 437h1v1h-1zM648 436h1v1h-1zM643 436h1v1h-1zM639 435h1v1h-1zM634 435h1v1h-1zM630 435h1v1h-1zM625 434h1v1h-1zM621 434h1v1h-1zM617 434h1v1h-1zM612 433h1v1h-1zM608 433h1v1h-1zM604 433h1v1h-1zM600 433h1v1h-1zM595 433h1v1h-1zM591 433h1v1h-1zM587 433h1v1h-1zM583 433h1v1h-1zM578 433h1v1h-1zM574 433h1v1h-1zM570 433h1v1h-1zM566 433h1v1h-1zM561 433h1v1h-1zM557 433h1v1h-1zM553 433h1v1h-1zM549 433h1v1h-1zM544 433h1v1h-1zM540 434h1v1h-1zM535 434h1v1h-1zM531 434h1v1h-1zM527 435h1v1h-1zM522 435h1v1h-1zM518 435h1v1h-1zM513 436h1v1h-1zM509 436h1v1h-1zM504 437h1v1h-1zM499 437h1v1h-1zM495 438h1v1h-1zM490 438h1v1h-1zM485 439h1v1h-1zM480 440h1v1h-1zM475 441h1v1h-1zM470 441h1v1h-1zM465 442h1v1h-1zM460 443h1v1h-1zM454 444h1v1h-1zM449 445h1v1h-1zM443 446h1v1h-1zM438 447h1v1h-1zM432 448h1v1h-1zM426 449h1v1h-1zM420 450h1v1h-1zM414 452h1v1h-1zM407 453h1v1h-1zM404 396h1v1h-1zM398 397h1v1h-1zM391 398h1v1h-1zM384 398h1v1h-1zM377 399h1v1h-1zM370 400h1v1h-1zM362 401h1v1h-1zM355 402h1v1h-1zM802 402h1v1h-1zM794 401h1v1h-1zM787 400h1v1h-1zM779 399h1v1h-1zM772 398h1v1h-1zM765 398h1v1h-1zM759 397h1v1h-1zM752 396h1v1h-1zM746 396h1v1h-1zM740 395h1v1h-1zM734 394h1v1h-1zM728 394h1v1h-1zM722 393h1v1h-1zM716 393h1v1h-1zM711 392h1v1h-1zM705 392h1v1h-1zM700 391h1v1h-1zM695 391h1v1h-1zM690 390h1v1h-1zM685 390h1v1h-1zM680 390h1v1h-1zM675 389h1v1h-1zM670 389h1v1h-1zM665 389h1v1h-1zM661 388h1v1h-1zM656 388h1v1h-1zM651 388h1v1h-1zM647 388h1v1h-1zM642 387h1v1h-1zM638 387h1v1h-1zM633 387h1v1h-1zM629 387h1v1h-1zM625 387h1v1h-1zM620 387h1v1h-1zM616 387h1v1h-1zM612 386h1v1h-1zM608 386h1v1h-1zM603 386h1v1h-1zM599 386h1v1h-1zM595 386h1v1h-1zM591 386h1v1h-1zM587 386h1v1h-1zM582 386h1v1h-1zM578 386h1v1h-1zM574 386h1v1h-1zM570 386h1v1h-1zM566 386h1v1h-1zM562 386h1v1h-1zM557 386h1v1h-1zM553 386h1v1h-1zM549 386h1v1h-1zM545 386h1v1h-1zM541 387h1v1h-1zM536 387h1v1h-1zM532 387h1v1h-1zM528 387h1v1h-1zM523 387h1v1h-1zM519 387h1v1h-1zM514 387h1v1h-1zM510 388h1v1h-1zM505 388h1v1h-1zM501 388h1v1h-1zM496 388h1v1h-1zM491 389h1v1h-1zM487 389h1v1h-1zM482 389h1v1h-1zM477 390h1v1h-1zM472 390h1v1h-1zM467 390h1v1h-1zM462 391h1v1h-1zM457 391h1v1h-1zM451 392h1v1h-1zM446 392h1v1h-1zM440 393h1v1h-1zM435 393h1v1h-1zM429 394h1v1h-1zM423 394h1v1h-1zM417 395h1v1h-1zM411 396h1v1h-1zM411 293h1v1h-1zM405 292h1v1h-1zM398 292h1v1h-1zM392 291h1v1h-1zM385 290h1v1h-1zM378 289h1v1h-1zM371 289h1v1h-1zM364 288h1v1h-1zM356 287h1v1h-1zM808 286h1v1h-1zM800 287h1v1h-1zM793 288h1v1h-1zM785 289h1v1h-1zM778 289h1v1h-1zM772 290h1v1h-1zM765 291h1v1h-1zM758 292h1v1h-1zM752 292h1v1h-1zM746 293h1v1h-1zM740 294h1v1h-1zM734 294h1v1h-1zM728 295h1v1h-1zM722 295h1v1h-1zM717 296h1v1h-1zM712 296h1v1h-1zM706 297h1v1h-1zM701 297h1v1h-1zM696 297h1v1h-1zM691 298h1v1h-1zM686 298h1v1h-1zM681 299h1v1h-1zM676 299h1v1h-1zM672 299h1v1h-1zM667 300h1v1h-1zM662 300h1v1h-1zM658 300h1v1h-1zM653 300h1v1h-1zM649 301h1v1h-1zM645 301h1v1h-1zM640 301h1v1h-1zM636 301h1v1h-1zM632 301h1v1h-1zM627 302h1v1h-1zM623 302h1v1h-1zM619 302h1v1h-1zM615 302h1v1h-1zM611 302h1v1h-1zM607 302h1v1h-1zM603 302h1v1h-1zM599 302h1v1h-1zM594 302h1v1h-1zM590 302h1v1h-1zM586 302h1v1h-1zM582 302h1v1h-1zM578 302h1v1h-1zM574 302h1v1h-1zM570 302h1v1h-1zM566 302h1v1h-1zM562 302h1v1h-1zM558 302h1v1h-1zM554 302h1v1h-1zM550 302h1v1h-1zM546 302h1v1h-1zM542 302h1v1h-1zM538 302h1v1h-1zM533 302h1v1h-1zM529 302h1v1h-1zM525 301h1v1h-1zM521 301h1v1h-1zM516 301h1v1h-1zM512 301h1v1h-1zM508 301h1v1h-1zM503 300h1v1h-1zM499 300h1v1h-1zM494 300h1v1h-1zM490 300h1v1h-1zM485 299h1v1h-1zM480 299h1v1h-1zM475 299h1v1h-1zM471 298h1v1h-1zM466 298h1v1h-1zM461 297h1v1h-1zM456 297h1v1h-1zM450 297h1v1h-1zM445 296h1v1h-1zM440 296h1v1h-1zM434 295h1v1h-1zM429 295h1v1h-1zM423 294h1v1h-1zM417 294h1v1h-1zM414 241h1v1h-1zM408 240h1v1h-1zM402 238h1v1h-1zM396 237h1v1h-1zM389 236h1v1h-1zM382 234h1v1h-1zM375 232h1v1h-1zM368 231h1v1h-1zM361 229h1v1h-1zM354 227h1v1h-1zM803 227h1v1h-1zM796 229h1v1h-1zM788 231h1v1h-1zM781 232h1v1h-1zM774 234h1v1h-1zM768 236h1v1h-1zM761 237h1v1h-1zM755 238h1v1h-1zM749 240h1v1h-1zM742 241h1v1h-1zM737 242h1v1h-1zM731 243h1v1h-1zM725 245h1v1h-1zM720 246h1v1h-1zM714 247h1v1h-1zM709 248h1v1h-1zM704 248h1v1h-1zM699 249h1v1h-1zM694 250h1v1h-1zM689 251h1v1h-1zM684 252h1v1h-1zM679 252h1v1h-1zM675 253h1v1h-1zM670 254h1v1h-1zM665 254h1v1h-1zM661 255h1v1h-1zM657 255h1v1h-1zM652 256h1v1h-1zM648 256h1v1h-1zM643 257h1v1h-1zM639 257h1v1h-1zM635 258h1v1h-1zM631 258h1v1h-1zM627 258h1v1h-1zM623 259h1v1h-1zM618 259h1v1h-1zM614 259h1v1h-1zM610 259h1v1h-1zM606 259h1v1h-1zM602 260h1v1h-1zM598 260h1v1h-1zM594 260h1v1h-1zM590 260h1v1h-1zM586 260h1v1h-1zM582 260h1v1h-1zM578 260h1v1h-1zM574 260h1v1h-1zM570 260h1v1h-1zM566 260h1v1h-1zM562 260h1v1h-1zM558 260h1v1h-1zM554 260h1v1h-1zM550 259h1v1h-1zM546 259h1v1h-1zM542 259h1v1h-1zM538 259h1v1h-1zM534 259h1v1h-1zM530 258h1v1h-1zM526 258h1v1h-1zM522 258h1v1h-1zM517 257h1v1h-1zM513 257h1v1h-1zM509 256h1v1h-1zM504 256h1v1h-1zM500 255h1v1h-1zM496 255h1v1h-1zM491 254h1v1h-1zM487 254h1v1h-1zM482 253h1v1h-1zM477 252h1v1h-1zM472 252h1v1h-1zM468 251h1v1h-1zM463 250h1v1h-1zM458 249h1v1h-1zM453 248h1v1h-1zM447 248h1v1h-1zM442 247h1v1h-1zM437 246h1v1h-1zM431 245h1v1h-1zM426 243h1v1h-1zM420 242h1v1h-1zM418 185h1v1h-1zM412 183h1v1h-1zM406 181h1v1h-1zM400 178h1v1h-1zM393 176h1v1h-1zM387 174h1v1h-1zM380 171h1v1h-1zM373 169h1v1h-1zM366 166h1v1h-1zM359 163h1v1h-1zM352 160h1v1h-1zM805 160h1v1h-1zM798 163h1v1h-1zM790 166h1v1h-1zM783 169h1v1h-1zM776 171h1v1h-1zM770 174h1v1h-1zM763 176h1v1h-1zM757 178h1v1h-1zM751 181h1v1h-1zM745 183h1v1h-1zM739 185h1v1h-1zM733 186h1v1h-1zM728 188h1v1h-1zM722 190h1v1h-1zM717 191h1v1h-1zM712 193h1v1h-1zM706 194h1v1h-1zM701 196h1v1h-1zM696 197h1v1h-1zM692 198h1v1h-1zM687 200h1v1h-1zM682 201h1v1h-1zM677 202h1v1h-1zM673 203h1v1h-1zM668 204h1v1h-1zM664 205h1v1h-1zM659 205h1v1h-1zM655 206h1v1h-1zM651 207h1v1h-1zM647 208h1v1h-1zM642 208h1v1h-1zM638 209h1v1h-1zM634 210h1v1h-1zM630 210h1v1h-1zM626 211h1v1h-1zM622 211h1v1h-1zM618 212h1v1h-1zM614 212h1v1h-1zM610 212h1v1h-1zM606 212h1v1h-1zM602 213h1v1h-1zM598 213h1v1h-1zM594 213h1v1h-1zM590 213h1v1h-1zM586 213h1v1h-1zM582 213h1v1h-1zM578 213h1v1h-1zM574 213h1v1h-1zM570 213h1v1h-1zM567 213h1v1h-1zM563 213h1v1h-1zM559 213h1v1h-1zM555 213h1v1h-1zM551 212h1v1h-1zM547 212h1v1h-1zM543 212h1v1h-1zM539 212h1v1h-1zM535 211h1v1h-1zM531 211h1v1h-1zM527 210h1v1h-1zM523 210h1v1h-1zM518 209h1v1h-1zM514 208h1v1h-1zM510 208h1v1h-1zM506 207h1v1h-1zM502 206h1v1h-1zM497 205h1v1h-1zM493 205h1v1h-1zM488 204h1v1h-1zM484 203h1v1h-1zM479 202h1v1h-1zM475 201h1v1h-1zM470 200h1v1h-1zM465 198h1v1h-1zM460 197h1v1h-1zM455 196h1v1h-1zM450 194h1v1h-1zM445 193h1v1h-1zM440 191h1v1h-1zM434 190h1v1h-1zM429 188h1v1h-1zM423 186h1v1h-1zM422 118h1v1h-1zM416 116h1v1h-1zM410 113h1v1h-1zM405 110h1v1h-1zM398 107h1v1h-1zM392 104h1v1h-1zM386 100h1v1h-1zM379 97h1v1h-1zM372 93h1v1h-1zM365 89h1v1h-1zM791 89h1v1h-1zM784 93h1v1h-1zM777 97h1v1h-1zM771 100h1v1h-1zM764 104h1v1h-1zM758 107h1v1h-1zM752 110h1v1h-1zM746 113h1v1h-1zM740 116h1v1h-1zM735 118h1v1h-1zM729 121h1v1h-1zM724 123h1v1h-1zM719 126h1v1h-1zM713 128h1v1h-1zM708 130h1v1h-1zM703 132h1v1h-1zM698 134h1v1h-1zM694 136h1v1h-1zM689 138h1v1h-1zM684 139h1v1h-1zM680 141h1v1h-1zM675 142h1v1h-1zM671 144h1v1h-1zM666 145h1v1h-1zM662 146h1v1h-1zM658 147h1v1h-1zM653 149h1v1h-1zM649 150h1v1h-1zM645 151h1v1h-1zM641 152h1v1h-1zM637 152h1v1h-1zM633 153h1v1h-1zM629 154h1v1h-1zM625 155h1v1h-1zM621 155h1v1h-1zM617 156h1v1h-1zM613 156h1v1h-1zM609 157h1v1h-1zM605 157h1v1h-1zM601 158h1v1h-1zM597 158h1v1h-1zM594 158h1v1h-1zM590 158h1v1h-1zM586 158h1v1h-1zM582 158h1v1h-1zM578 158h1v1h-1zM574 158h1v1h-1zM571 158h1v1h-1zM567 158h1v1h-1zM563 158h1v1h-1zM559 158h1v1h-1zM555 158h1v1h-1zM551 157h1v1h-1zM548 157h1v1h-1zM544 156h1v1h-1zM540 156h1v1h-1zM536 155h1v1h-1zM532 155h1v1h-1zM528 154h1v1h-1zM524 153h1v1h-1zM520 152h1v1h-1zM516 152h1v1h-1zM512 151h1v1h-1zM507 150h1v1h-1zM503 149h1v1h-1zM499 147h1v1h-1zM495 146h1v1h-1zM490 145h1v1h-1zM486 144h1v1h-1zM481 142h1v1h-1zM477 141h1v1h-1zM472 139h1v1h-1zM468 138h1v1h-1zM463 136h1v1h-1zM458 134h1v1h-1zM453 132h1v1h-1zM448 130h1v1h-1zM443 128h1v1h-1zM438 126h1v1h-1zM433 123h1v1h-1zM427 121h1v1h-1z" fill="#0080c8"/><path d="M408 344h1v1h-1zM401 344h1v1h-1zM395 344h1v1h-1zM388 344h1v1h-1zM381 344h1v1h-1zM374 344h1v1h-1zM367 344h1v1h-1zM359 344h1v1h-1zM351 344h1v1h-1zM805 344h1v1h-1zM797 344h1v1h-1zM790 344h1v1h-1zM782 344h1v1h-1zM775 344h1v1h-1zM769 344h1v1h-1zM762 344h1v1h-1zM755 344h1v1h-1zM749 344h1v1h-1zM743 344h1v1h-1zM737 344h1v1h-1zM731 344h1v1h-1zM725 344h1v1h-1zM719 344h1v1h-1zM714 344h1v1h-1zM709 344h1v1h-1zM703 344h1v1h-1zM698 344h1v1h-1zM693 344h1v1h-1zM688 344h1v1h-1zM683 344h1v1h-1zM678 344h1v1h-1zM673 344h1v1h-1zM668 344h1v1h-1zM664 344h1v1h-1zM659 344h1v1h-1zM655 344h1v1h-1zM650 344h1v1h-1zM646 344h1v1h-1zM641 344h1v1h-1zM637 344h1v1h-1zM633 344h1v1h-1zM628 344h1v1h-1zM624 344h1v1h-1zM620 344h1v1h-1zM616 344h1v1h-1zM611 344h1v1h-1zM607 344h1v1h-1zM603 344h1v1h-1zM599 344h1v1h-1zM595 344h1v1h-1zM591 344h1v1h-1zM587 344h1v1h-1zM582 344h1v1h-1zM578 344h1v1h-1zM574 344h1v1h-1zM570 344h1v1h-1zM566 344h1v1h-1zM562 344h1v1h-1zM558 344h1v1h-1zM554 344h1v1h-1zM549 344h1v1h-1zM545 344h1v1h-1zM541 344h1v1h-1zM537 344h1v1h-1zM533 344h1v1h-1zM528 344h1v1h-1zM524 344h1v1h-1zM520 344h1v1h-1zM515 344h1v1h-1zM511 344h1v1h-1zM506 344h1v1h-1zM502 344h1v1h-1zM497 344h1v1h-1zM493 344h1v1h-1zM488 344h1v1h-1zM483 344h1v1h-1zM479 344h1v1h-1zM474 344h1v1h-1zM469 344h1v1h-1zM464 344h1v1h-1zM459 344h1v1h-1zM453 344h1v1h-1zM448 344h1v1h-1zM443 344h1v1h-1zM437 344h1v1h-1zM432 344h1v1h-1zM426 344h1v1h-1zM420 344h1v1h-1zM414 344h1v1h-1z" fill="#a80000"/><path d="M576 323.5h5M578.5 321v5" stroke="#1888d0" stroke-width="1" fill="none"/><path d="M476 305h1v1h-1zM472 305h1v1h-1zM468 306h1v1h-1zM464 307h1v1h-1zM460 309h1v1h-1zM457 312h1v1h-1zM454 315h1v1h-1zM452 319h1v1h-1zM450 323h1v1h-1zM450 327h1v1h-1zM450 331h1v1h-1zM451 335h1v1h-1zM453 338h1v1h-1zM455 342h1v1h-1zM459 345h1v1h-1zM462 347h1v1h-1zM466 349h1v1h-1zM470 350h1v1h-1zM474 350h1v1h-1zM479 350h1v1h-1zM483 348h1v1h-1zM487 347h1v1h-1zM490 345h1v1h-1zM493 342h1v1h-1zM495 339h1v1h-1zM497 335h1v1h-1zM498 332h1v1h-1zM499 328h1v1h-1zM499 324h1v1h-1zM498 321h1v1h-1zM496 317h1v1h-1zM494 314h1v1h-1zM491 311h1v1h-1zM488 309h1v1h-1zM484 307h1v1h-1zM480 306h1v1h-1z" fill="#18a0e0"/><path d="M475 330v-2h1v-1h2v1h-2v2z" fill="#28a8f0"/><line x1="522.3" y1="345.5" x2="547.3" y2="89.0" stroke="#00f000" stroke-width="0.8"/><line x1="546.4" y1="104.0" x2="547.9" y2="89.0" stroke="#ff0000" stroke-width="2"/><line x1="522.3" y1="345.5" x2="567.6" y2="89.0" stroke="#00f000" stroke-width="0.8"/><line x1="522.0" y1="345.5" x2="757.8" y2="89.0" stroke="#00f000" stroke-width="0.8"/><line x1="613.0" y1="246.6" x2="757.8" y2="89.0" stroke="#ff0000" stroke-width="1.6"/><line x1="522.0" y1="345.5" x2="809.5" y2="96.5" stroke="#00f000" stroke-width="0.8"/><line x1="692.0" y1="198.0" x2="809.5" y2="96.5" stroke="#ff0000" stroke-width="1.6"/><line x1="522.0" y1="345.5" x2="809.5" y2="158.5" stroke="#008c00" stroke-width="0.8"/><line x1="522.0" y1="345.5" x2="809.5" y2="196.0" stroke="#00f000" stroke-width="0.8"/><line x1="522.0" y1="346.5" x2="809.5" y2="299.3" stroke="#00f000" stroke-width="0.8"/><line x1="806.0" y1="299.9" x2="809.5" y2="299.3" stroke="#ff0000" stroke-width="1.6"/><line x1="522.0" y1="347.5" x2="809.5" y2="318.0" stroke="#008c00" stroke-width="0.8"/><path d="M517.5 349.5h5M520.5 346.5v5" stroke="#ff9000" stroke-width="1" fill="none"/><path d="M519.5 347.5h5M522.5 344.5v5" stroke="#ff9000" stroke-width="1" fill="none"/><path d="M520.5 349.5h5M523.5 346.5v5" stroke="#ffd800" stroke-width="1" fill="none"/><path d="M516.5 348.5h5M519.5 345.5v5" stroke="#ffd800" stroke-width="1" fill="none"/><path d="M518.5 350.5h5M521.5 347.5v5" stroke="#ff9000" stroke-width="1" fill="none"/><rect x="519" y="347" width="4" height="4" fill="#ff9800"/><rect x="481" y="326" width="35" height="15" fill="#000"/><text x="481.5" y="338.6" font-family="Liberation Sans,sans-serif" font-size="11.5" fill="#2aa0ee" textLength="33.2" lengthAdjust="spacingAndGlyphs" style="shape-rendering:auto">J5_etA</text><rect x="405" y="338" width="8" height="13" fill="#000"/><text x="405.8" y="348.8" font-family="Liberation Sans,sans-serif" font-size="12.4" fill="#2aa0ee" textLength="6.3" lengthAdjust="spacingAndGlyphs">0</text><rect x="350" y="541" width="130" height="14" fill="#000"/><text x="351.2" y="552" font-family="Liberation Sans,sans-serif" font-size="11.6" fill="#f4f4ff" textLength="127" lengthAdjust="spacing">2014/05/05 .. 2014/05/06</text><g style="shape-rendering:auto" fill="none" stroke="#ff1414" stroke-width="2.2" stroke-linecap="round" stroke-linejoin="round"><path d="M518 377.5 C500 381,480 378,465 363.5"/><path d="M466.2 374 L465 363.5 L476.5 367.3"/></g></svg>
<svg class="a" style="left:0;top:0;pointer-events:none" width="345" height="200" viewBox="0 0 345 200"><g fill="none" stroke="#ff1414" stroke-width="2.2" stroke-linecap="round" stroke-linejoin="round"><path d="M143.0 74.0 C140.2 74.6,131.8 75.6,126.5 77.5 C121.2 79.4,115.4 82.5,111.0 85.6 C106.6 88.7,104.2 92.2,100.3 95.9 C96.4 99.6,92.9 104.0,87.7 107.6 C82.5 111.2,75.0 114.3,69.2 117.7 C63.4 121.1,57.8 124.7,53.1 128.0 C48.4 131.3,45.0 134.7,41.1 137.3 C37.2 139.9,31.4 142.5,29.5 143.5"/><path d="M44.4 128.2 L29.5 143.5 L42.9 138"/></g></svg>
<div class="a" style="left:0;top:0;width:816px;height:562px;border:4px solid #d4d0c8;box-shadow:inset -1px -1px transparent;pointer-events:none;"></div>
<div class="a" style="left:0;top:0;width:824px;height:570px;box-sizing:border-box;box-shadow:inset -1px -1px #404040,inset 1px 1px #d4d0c8,inset -2px -2px #808080,inset 2px 2px #fff;pointer-events:none;"></div>
</body></html>
